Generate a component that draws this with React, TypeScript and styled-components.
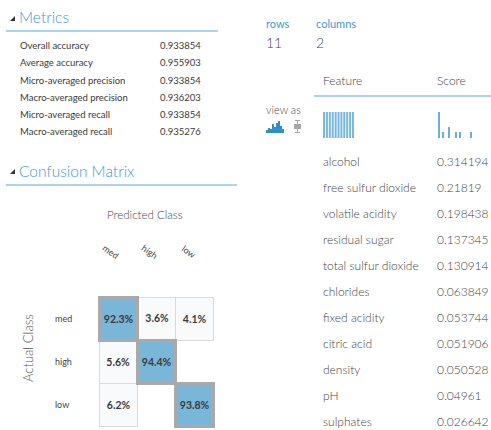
import React from 'react';
import styled, { createGlobalStyle } from 'styled-components';

const GlobalStyle = createGlobalStyle`
  html, body {
    margin: 0;
    padding: 0;
    background: #ffffff;
  }
  body {
    font-family: Lato, "Open Sans", sans-serif;
    color: #333;
  }
`;

type Metric = { label: string; value: string };
type Score = { feature: string; score: string };

const metrics: Metric[] = [
    { label: 'Overall accuracy', value: '0.933854' },
    { label: 'Average accuracy', value: '0.955903' },
    { label: 'Micro-averaged precision', value: '0.933854' },
    { label: 'Macro-averaged precision', value: '0.936203' },
    { label: 'Micro-averaged recall', value: '0.933854' },
    { label: 'Macro-averaged recall', value: '0.935276' },
];

const classes = ['med', 'high', 'low'];

// null = empty cell
const matrix: (string | null)[][] = [
    ['92.3%', '3.6%', '4.1%'],
    ['5.6%', '94.4%', null],
    ['6.2%', null, '93.8%'],
];

const scores: Score[] = [
    { feature: 'alcohol', score: '0.314194' },
    { feature: 'free sulfur dioxide', score: '0.21819' },
    { feature: 'volatile acidity', score: '0.198438' },
    { feature: 'residual sugar', score: '0.137345' },
    { feature: 'total sulfur dioxide', score: '0.130914' },
    { feature: 'chlorides', score: '0.063849' },
    { feature: 'fixed acidity', score: '0.053744' },
    { feature: 'citric acid', score: '0.051906' },
    { feature: 'density', score: '0.050528' },
    { feature: 'pH', score: '0.04961' },
    { feature: 'sulphates', score: '0.026642' },
];

const Page = styled.div`
    display: flex;
    width: 491px;
    height: 430px;
    overflow: hidden;
`;

const LeftPane = styled.div`
    width: 260px;
    flex-shrink: 0;
    padding-top: 8px;
`;

const RightPane = styled.div`
    flex: 1;
    padding: 17px 0 0 6px;
`;

/* ---------- section headers ---------- */

const SectionHeader = styled.div<{ $width: number; $top?: number }>`
    display: flex;
    align-items: center;
    margin: ${(p) => p.$top ?? 0}px 0 0 6px;
    width: ${(p) => p.$width}px;
    padding-bottom: 4px;
    border-bottom: 2px solid #a9d4ea;
`;

const Caret = styled.span`
    width: 0;
    height: 0;
    margin: 2px 4px 0 4px;
    border-left: 5px solid transparent;
    border-bottom: 5px solid #333;
`;

const SectionTitle = styled.span`
    font-size: 15.5px;
    line-height: 18px;
    font-weight: 300;
    color: #3a9ad4;
`;

/* ---------- metrics ---------- */

const MetricList = styled.div`
    margin-top: 5px;
    padding-left: 20px;
`;

const MetricRow = styled.div`
    display: flex;
    font-size: 9.5px;
    line-height: 17.3px;
    color: #3a3a3a;
`;

const MetricLabel = styled.span`
    width: 140px;
`;

/* ---------- confusion matrix ---------- */

const MatrixArea = styled.div`
    padding-left: 6px;
`;

const PredictedTitle = styled.div`
    margin: 21px 0 0 101px;
    font-size: 11.5px;
    line-height: 16px;
    font-weight: 300;
    color: #444;
`;

const ColLabelRow = styled.div`
    display: flex;
    margin: 21px 0 36px 92px;
    height: 16px;
`;

const ColLabel = styled.span`
    width: 39px;
    text-align: center;
    font-size: 9px;
    line-height: 16px;
    color: #444;
    transform: translateX(-7px) rotate(35deg);
`;

const MatrixBody = styled.div`
    display: flex;
`;

const AxisLabel = styled.div`
    width: 44px;
    display: flex;
    align-items: center;
    justify-content: center;
    padding-top: 28px;
    font-size: 13px;
    font-weight: 300;
    color: #555;
    writing-mode: vertical-rl;
    transform: rotate(180deg);
`;

const Grid = styled.table`
    border-collapse: collapse;
    table-layout: fixed;
`;

const RowLabel = styled.td`
    width: 43px;
    height: 40px;
    padding: 0 0 0 5px;
    font-size: 9px;
    color: #444;
`;

const Cell = styled.td<{ $kind: 'hit' | 'miss' | 'none' }>`
    width: 35px;
    height: 40px;
    padding: 0;
    text-align: center;
    font-size: 10.5px;
    font-weight: 700;
    color: #3a3a3a;
    background: ${(p) => (p.$kind === 'hit' ? '#79b6d8' : p.$kind === 'miss' ? '#f8fafc' : 'transparent')};
    border: ${(p) => (p.$kind === 'hit' ? '3px solid #a9a9a9' : p.$kind === 'miss' ? '1px solid #dadada' : 'none')};
`;

/* ---------- right side ---------- */

const Stats = styled.div`
    display: flex;
`;

const Stat = styled.div<{ $width: number }>`
    display: flex;
    flex-direction: column;
    gap: 3px;
    width: ${(p) => p.$width}px;
`;

const StatLabel = styled.span`
    font-size: 11px;
    line-height: 14px;
    color: #3a9ad4;
`;

const StatValue = styled.span`
    font-size: 14px;
    line-height: 18px;
    font-weight: 300;
    color: #444;
`;

const Content = styled.div`
    display: flex;
    margin-top: 13px;
`;

const ViewAs = styled.div`
    width: 48px;
    flex-shrink: 0;
    display: flex;
    flex-direction: column;
    gap: 3px;
    padding-top: 38px;
`;

const ViewAsLabel = styled.span`
    font-size: 11px;
    line-height: 14px;
    font-weight: 300;
    color: #444;
`;

const ViewIcons = styled.div`
    display: flex;
    align-items: center;
    gap: 9px;
`;

const Table = styled.div`
    flex: 1;
`;

const HeaderRow = styled.div`
    display: flex;
    align-items: center;
    height: 30px;
    border-bottom: 2px solid #a9d4ea;
    font-size: 12px;
    font-weight: 300;
    color: #444;
`;

const ChartRow = styled.div`
    display: flex;
    padding: 15px 0 7px;
`;

const DataRow = styled.div`
    display: flex;
    align-items: center;
    height: 26px;
    font-size: 12px;
    font-weight: 300;
    color: #444;
`;

const FeatureCol = styled.div`
    width: 114px;
    padding-left: 9px;
    flex-shrink: 0;
`;

const ScoreCol = styled.div`
    flex: 1;
`;

/* ---------- small drawings ---------- */

const HistogramIcon = () => (
    <svg width="18" height="12" viewBox="0 0 18 12">
        <g fill="#2f8fcb">
            <rect x="0" y="9" width="2" height="3" />
            <rect x="2" y="7" width="2" height="5" />
            <rect x="4" y="8" width="2" height="4" />
            <rect x="6" y="3" width="2" height="9" />
            <rect x="8" y="6" width="2" height="6" />
            <rect x="10" y="2" width="2" height="10" />
            <rect x="12" y="0" width="2" height="12" />
            <rect x="14" y="5" width="2" height="7" />
            <rect x="16" y="8" width="2" height="4" />
        </g>
    </svg>
);

const BoxPlotIcon = () => (
    <svg width="9" height="13" viewBox="0 0 9 13">
        <g fill="#a6a6a6">
            <rect x="2" y="0" width="5" height="1" />
            <rect x="4" y="0" width="1" height="13" />
            <rect x="1" y="4" width="7" height="5" />
            <rect x="2" y="12" width="5" height="1" />
        </g>
    </svg>
);

const FeatureStrip = () => (
    <svg width="32" height="26" viewBox="0 0 32 26">
        {Array.from({ length: 11 }).map((_, i) => (
            <rect key={i} x={i * 2.9} y="0" width="2" height="26" fill="#78b8dc" />
        ))}
    </svg>
);

const ScoreHistogram = () => (
    <svg width="40" height="26" viewBox="0 0 40 26">
        <g fill="#6aafd7">
            <rect x="1" y="0" width="2" height="26" />
            <rect x="5" y="20" width="2" height="6" />
            <rect x="11" y="15" width="2" height="11" />
            <rect x="18" y="20" width="2" height="6" />
            <rect x="22" y="20" width="2" height="6" />
            <rect x="33" y="20" width="2" height="6" />
        </g>
    </svg>
);

export default function App() {
    return (
        <Page>
            <GlobalStyle />
            <LeftPane>
                <SectionHeader $width={212}>
                    <Caret />
                    <SectionTitle>Metrics</SectionTitle>
                </SectionHeader>
                <MetricList>
                    {metrics.map((m) => (
                        <MetricRow key={m.label}>
                            <MetricLabel>{m.label}</MetricLabel>
                            <span>{m.value}</span>
                        </MetricRow>
                    ))}
                </MetricList>

                <SectionHeader $width={231} $top={21}>
                    <Caret />
                    <SectionTitle>Confusion Matrix</SectionTitle>
                </SectionHeader>
                <MatrixArea>
                    <PredictedTitle>Predicted Class</PredictedTitle>
                    <ColLabelRow>
                        {classes.map((c) => (
                            <ColLabel key={c}>{c}</ColLabel>
                        ))}
                    </ColLabelRow>
                    <MatrixBody>
                        <AxisLabel>Actual Class</AxisLabel>
                        <Grid>
                            <tbody>
                                {matrix.map((row, r) => (
                                    <tr key={classes[r]}>
                                        <RowLabel>{classes[r]}</RowLabel>
                                        {row.map((v, c) => (
                                            <Cell key={c} $kind={v === null ? 'none' : r === c ? 'hit' : 'miss'}>
                                                {v}
                                            </Cell>
                                        ))}
                                    </tr>
                                ))}
                            </tbody>
                        </Grid>
                    </MatrixBody>
                </MatrixArea>
            </LeftPane>

            <RightPane>
                <Stats>
                    <Stat $width={50}>
                        <StatLabel>rows</StatLabel>
                        <StatValue>11</StatValue>
                    </Stat>
                    <Stat $width={80}>
                        <StatLabel>columns</StatLabel>
                        <StatValue>2</StatValue>
                    </Stat>
                </Stats>
                <Content>
                    <ViewAs>
                        <ViewAsLabel>view as</ViewAsLabel>
                        <ViewIcons>
                            <HistogramIcon />
                            <BoxPlotIcon />
                        </ViewIcons>
                    </ViewAs>
                    <Table>
                        <HeaderRow>
                            <FeatureCol>Feature</FeatureCol>
                            <ScoreCol>Score</ScoreCol>
                        </HeaderRow>
                        <ChartRow>
                            <FeatureCol>
                                <FeatureStrip />
                            </FeatureCol>
                            <ScoreCol>
                                <ScoreHistogram />
                            </ScoreCol>
                        </ChartRow>
                        {scores.map((s) => (
                            <DataRow key={s.feature}>
                                <FeatureCol>{s.feature}</FeatureCol>
                                <ScoreCol>{s.score}</ScoreCol>
                            </DataRow>
                        ))}
                    </Table>
                </Content>
            </RightPane>
        </Page>
    );
}
